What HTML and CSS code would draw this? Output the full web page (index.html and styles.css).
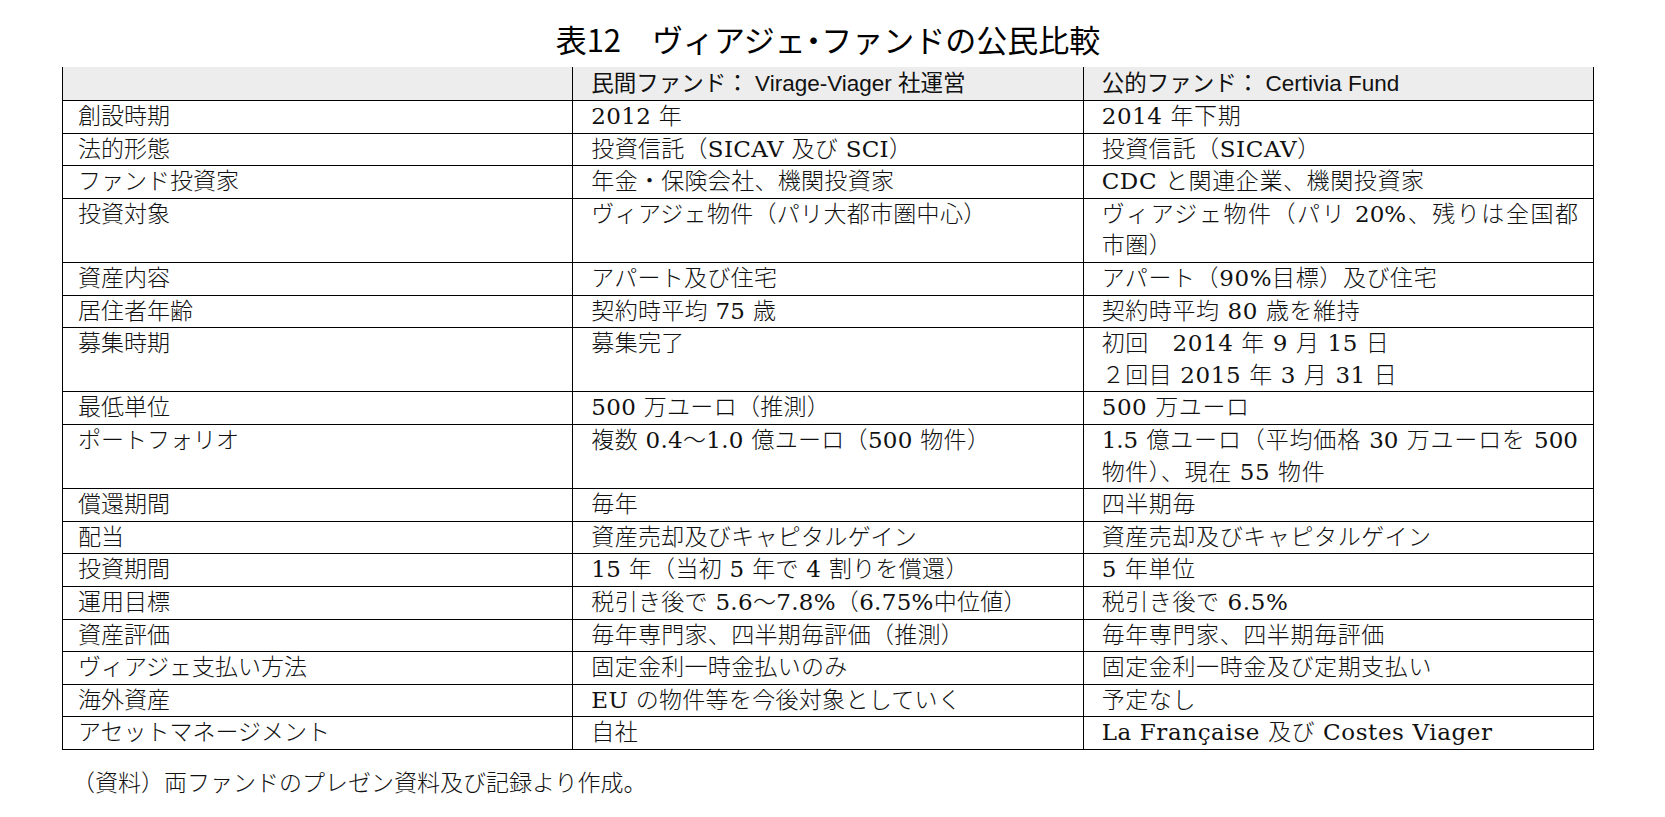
FILE: index.html
```html
<!DOCTYPE html>
<html lang="ja">
<head>
<meta charset="utf-8">
<title>表12 ヴィアジェ・ファンドの公民比較</title>
<link rel="stylesheet" href="styles.css">
</head>
<body>
<div class="page">
  <h1 class="title">表12　ヴィアジェ<span class="dot">・</span>ファンドの公民比較</h1>
  <table class="cmp">
    <colgroup><col class="c1"><col class="c2"><col class="c3"></colgroup>
    <thead>
      <tr><th></th><th>民間ファンド： Virage-Viager 社運営</th><th>公的ファンド： Certivia Fund</th></tr>
    </thead>
    <tbody>
      <tr><td>創設時期</td><td>2012 年</td><td>2014 年下期</td></tr>
      <tr><td>法的形態</td><td>投資信託（SICAV 及び SCI）</td><td>投資信託（SICAV）</td></tr>
      <tr><td>ファンド投資家</td><td>年金・保険会社、機関投資家</td><td>CDC と関連企業、機関投資家</td></tr>
      <tr><td>投資対象</td><td>ヴィアジェ物件（パリ大都市圏中心）</td><td><span class="jl">ヴィアジェ物件（パリ 20%、残りは全国都</span>市圏）</td></tr>
      <tr><td>資産内容</td><td>アパート及び住宅</td><td>アパート（90%目標）及び住宅</td></tr>
      <tr><td>居住者年齢</td><td>契約時平均 75 歳</td><td>契約時平均 80 歳を維持</td></tr>
      <tr><td>募集時期</td><td>募集完了</td><td>初回　2014 年 9 月 15 日<br>２回目 2015 年 3 月 31 日</td></tr>
      <tr><td>最低単位</td><td>500 万ユーロ（推測）</td><td>500 万ユーロ</td></tr>
      <tr><td>ポートフォリオ</td><td>複数 0.4～1.0 億ユーロ（500 物件）</td><td><span class="jl">1.5 億ユーロ（平均価格 30 万ユーロを 500</span>物件）、現在 55 物件</td></tr>
      <tr><td>償還期間</td><td>毎年</td><td>四半期毎</td></tr>
      <tr><td>配当</td><td>資産売却及びキャピタルゲイン</td><td>資産売却及びキャピタルゲイン</td></tr>
      <tr><td>投資期間</td><td>15 年（当初 5 年で 4 割りを償還）</td><td>5 年単位</td></tr>
      <tr><td>運用目標</td><td>税引き後で 5.6～7.8%（6.75%中位値）</td><td>税引き後で 6.5%</td></tr>
      <tr><td>資産評価</td><td>毎年専門家、四半期毎評価（推測）</td><td>毎年専門家、四半期毎評価</td></tr>
      <tr><td>ヴィアジェ支払い方法</td><td>固定金利一時金払いのみ</td><td>固定金利一時金及び定期支払い</td></tr>
      <tr><td>海外資産</td><td>EU の物件等を今後対象としていく</td><td>予定なし</td></tr>
      <tr><td>アセットマネージメント</td><td>自社</td><td>La Française 及び Costes Viager</td></tr>
    </tbody>
  </table>
  <p class="note">（資料）両ファンドのプレゼン資料及び記録より作成。</p>
</div>
</body>
</html>
```
FILE: styles.css
```css
html, body {
  margin: 0;
  padding: 0;
  background: #ffffff;
  color: #111111;
}

.page {
  width: 1665px;
  height: 817px;
  overflow: hidden;
}

.title {
  margin: 0 0 8px 62px;
  padding-top: 19px;
  width: 1532px;
  text-align: center;
  font-family: "Noto Sans CJK JP", sans-serif;
  font-weight: 400;
  font-size: 31px;
  line-height: 40px;
  color: #000;
}

.title .dot {
  font-feature-settings: "halt";
}

.cmp {
  margin-left: 62px;
  width: 1532px;
  border-collapse: collapse;
  table-layout: fixed;
  font-family: "DejaVu Serif", "Noto Sans CJK JP", serif;
  font-weight: 300;
  font-size: 23px;
}

.cmp col.c1,
.cmp col.c2,
.cmp col.c3 {
  width: 33.333%;
}

.cmp th,
.cmp td {
  border: 1px solid #000;
  padding: 0 15px;
  text-align: left;
  vertical-align: top;
  white-space: nowrap;
  line-height: 31.6px;
  font-weight: 300;
}

.cmp thead th {
  background: #ededed;
  border-top: none;
  line-height: 33px;
  font-family: "Liberation Sans", "Noto Sans CJK JP", sans-serif;
  font-size: 22.5px;
  font-weight: 400;
  padding-left: 18px;
}

.cmp tbody td:nth-child(2) {
  padding-left: 18px;
  letter-spacing: 0.3px;
}

.cmp tbody td:nth-child(3) {
  padding-left: 18px;
  letter-spacing: 0.6px;
}

.cmp .jl {
  display: block;
  white-space: normal;
  letter-spacing: 0;
  text-align: justify;
  text-align-last: justify;
  text-justify: inter-character;
}

.note {
  margin: 18px 0 0 72px;
  font-family: "DejaVu Serif", "Noto Sans CJK JP", serif;
  font-weight: 300;
  font-size: 23px;
  line-height: 31px;
}
```
